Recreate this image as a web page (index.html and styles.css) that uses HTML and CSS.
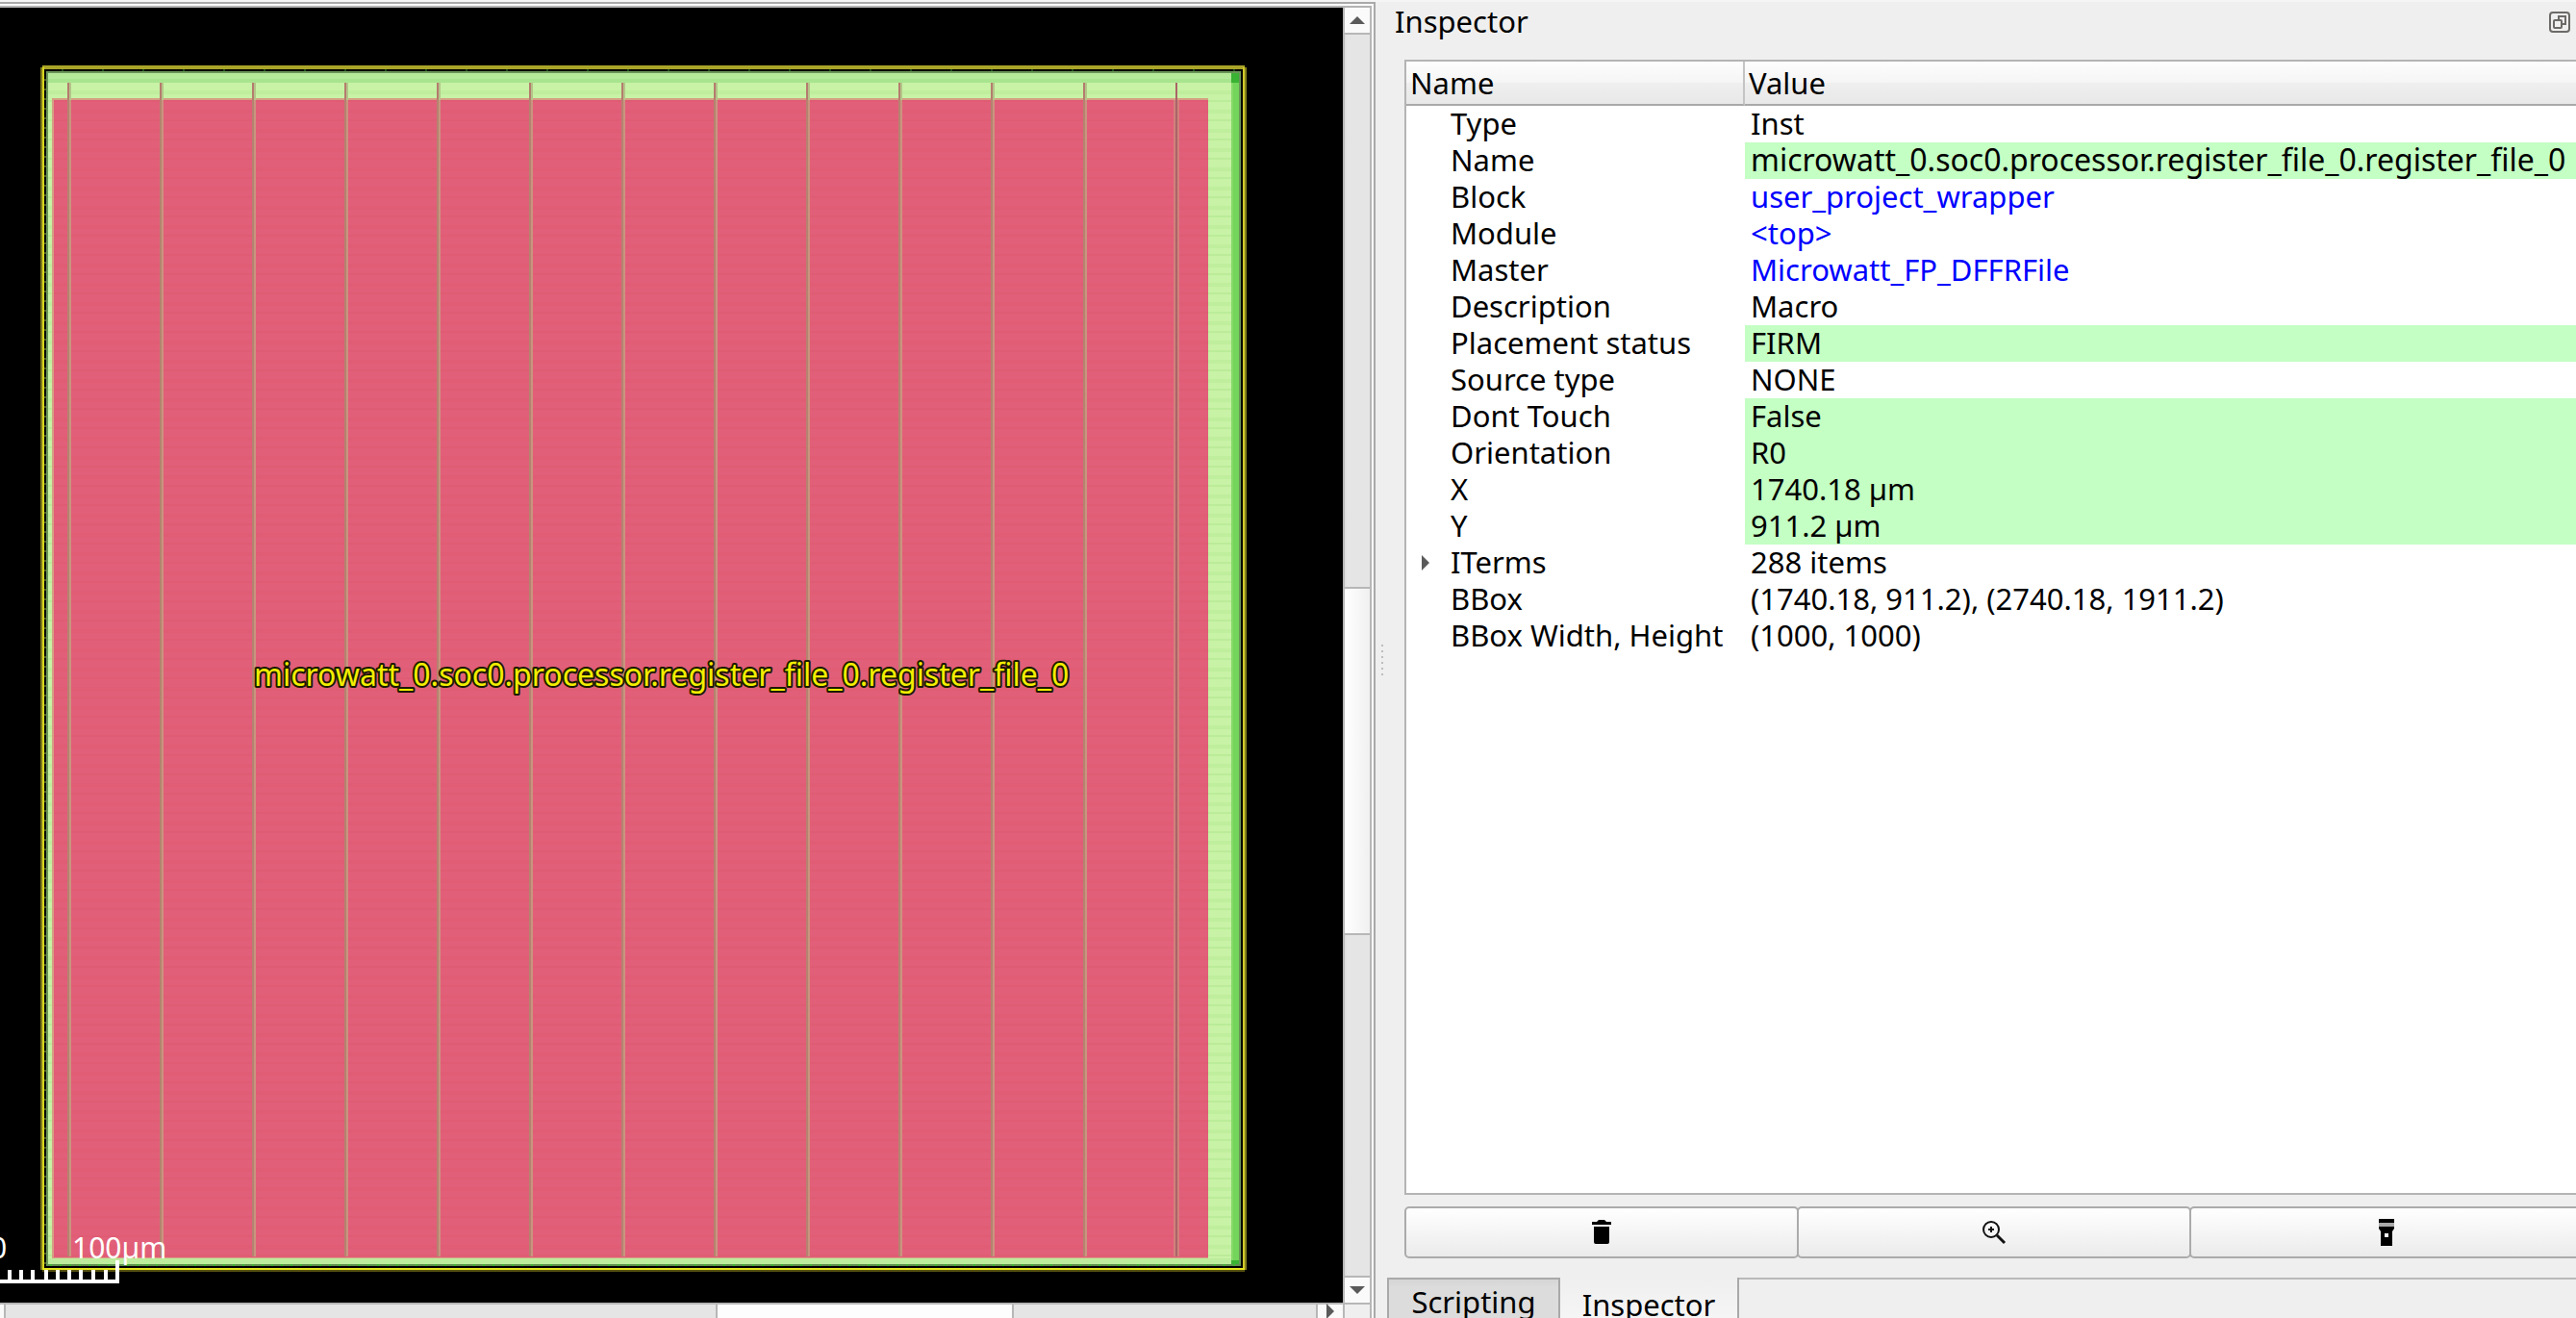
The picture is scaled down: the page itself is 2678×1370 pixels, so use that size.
FILE: index.html
```html
<!DOCTYPE html>
<html lang="en">
<head>
<meta charset="utf-8">
<title>Inspector</title>
<link rel="stylesheet" href="styles.css">
</head>
<body>
<div class="window">
  <main class="viewer">
    <div class="viewport">
      <svg class="layout" viewBox="0 0 1396 1346" preserveAspectRatio="xMinYMin slice" role="img" aria-label="Macro layout">
        <defs>
          <pattern id="rows" width="20" height="20" patternUnits="userSpaceOnUse">
            <rect width="20" height="20" fill="#c8f2a6"/>
            <rect y="6" width="20" height="4" fill="#bfee9d"/>
            <rect y="16" width="20" height="2" fill="#bbec99"/>
          </pattern>
          <pattern id="metal" width="20" height="20" patternUnits="userSpaceOnUse">
            <rect width="20" height="20" fill="#e25f79"/>
            <rect y="6" width="20" height="4" fill="#e05d75"/>
            <rect y="16" width="20" height="2" fill="#df5c74"/>
          </pattern>
          <pattern id="straps" x="70" width="96" height="20" patternUnits="userSpaceOnUse">
            <rect width="2" height="20" fill="#b4836f"/>
            <rect x="2" width="2" height="20" fill="#ca947f"/>
          </pattern>
          <pattern id="strap-ends" x="70" width="96" height="20" patternUnits="userSpaceOnUse">
            <rect width="2" height="20" fill="#b57c6e"/>
            <rect x="2" width="2" height="20" fill="#b5c489"/>
          </pattern>
          <pattern id="pins" x="64" width="42" height="2" patternUnits="userSpaceOnUse">
            <rect width="2" height="2" fill="#1d4a17"/>
          </pattern>
          <pattern id="sidepins" width="2" height="10" y="4" patternUnits="userSpaceOnUse">
            <rect width="2" height="2" fill="#4c5a1c"/>
          </pattern>
          <pattern id="dashes" x="2" width="10" height="2" patternUnits="userSpaceOnUse">
            <rect width="10" height="2" fill="#5f8f4d"/>
            <rect width="2" height="2" fill="#3fb435"/>
          </pattern>
        </defs>
        <g shape-rendering="crispEdges">
          <rect x="44" y="60" width="1250" height="4" fill="#a9a428"/>
          <rect x="42" y="62" width="2" height="1250" fill="#7d7a1c"/>
          <rect x="44" y="62" width="2" height="1250" fill="#d9d61f"/>
          <rect x="1292" y="62" width="2" height="1250" fill="#d0c92a"/>
          <rect x="1294" y="62" width="2" height="1250" fill="#857f1e"/>
          <rect x="44" y="1310" width="1250" height="2" fill="#e5e31d"/>
          <rect x="44" y="1312" width="1250" height="2" fill="#555110"/>
          <rect x="46" y="64" width="1246" height="2" fill="url(#pins)"/>
          <rect x="46" y="70" width="2" height="1236" fill="url(#sidepins)"/>
          <rect x="48" y="66" width="1242" height="1240" fill="#6a9558"/>
          <rect x="50" y="68" width="1238" height="1238" fill="url(#rows)"/>
          <rect x="50" y="68" width="1238" height="6" fill="#b5e99a"/>
          <rect x="50" y="74" width="1238" height="4" fill="#a8e48e"/>
          <rect x="50" y="1300" width="1238" height="6" fill="#bdec9c"/>
          <rect x="48" y="1306" width="1242" height="2" fill="url(#dashes)"/>
          <rect x="1280" y="68" width="8" height="1238" fill="#73d55b"/>
          <rect x="1280" y="68" width="2" height="1238" fill="#86d969"/>
          <rect x="1280" y="68" width="8" height="10" fill="#3ab233"/>
          <rect x="1280" y="1302" width="8" height="4" fill="#3ab233"/>
          <rect x="54" y="94" width="1202" height="1206" fill="#d5a083"/>
          <rect x="56" y="96" width="1200" height="1203" fill="url(#metal)"/>
          <rect x="70" y="78" width="1150" height="18" fill="url(#strap-ends)"/>
          <rect x="70" y="96" width="1150" height="1202" fill="url(#straps)"/>
          <rect x="1220" y="96" width="6" height="1202" fill="#d2807c"/>
          <rect x="1222" y="78" width="2" height="1220" fill="#ab6468"/>
        </g>
        <text class="inst-label" x="264" y="705">microwatt_0.soc0.processor.register_file_0.register_file_0</text>
        <g shape-rendering="crispEdges" fill="#fff">
          <rect y="1322" width="124" height="4"/>
          <rect x="120" y="1302" width="4" height="24"/>
          <path d="M8 1312h4v10h-4zM20 1312h4v10h-4zM32 1312h4v10h-4zM46 1312h4v10h-4zM58 1312h4v10h-4zM70 1312h4v10h-4zM82 1312h4v10h-4zM95 1312h4v10h-4zM108 1312h4v10h-4z"/>
        </g>
        <text class="scale-label" x="-10" y="1300">0</text>
        <text class="scale-label" x="75" y="1300">100µm</text>
      </svg>
    </div>
    <div class="vbar">
      <button class="step" aria-label="Scroll up"><svg width="16" height="8"><path d="M0 8L8 0l8 8z"/></svg></button>
      <div class="trough"></div>
      <div class="thumb"></div>
      <div class="trough rest"></div>
      <button class="step" aria-label="Scroll down"><svg width="16" height="8"><path d="M0 0h16L8 8z"/></svg></button>
    </div>
    <div class="hbar">
      <button class="step" aria-label="Scroll left"></button>
      <div class="trough"></div>
      <div class="thumb"></div>
      <div class="trough rest"></div>
      <button class="step" aria-label="Scroll right"><svg width="8" height="16"><path d="M0 0l8 8-8 8z"/></svg></button>
    </div>
    <div class="corner"></div>
  </main>

  <div class="splitter"><i></i><i></i><i></i><i></i><i></i><i></i></div>

  <aside class="dock">
    <header class="dock-title">
      <h1>Inspector</h1>
      <button class="float" aria-label="Float panel">
        <svg width="22" height="22" fill="none" stroke="#6c6a67" stroke-width="2"><rect x="1" y="1" width="20" height="20" rx="3"/><path d="M10 8V5h7v8h-3"/><rect x="5" y="9" width="8" height="8" rx="1"/></svg>
      </button>
    </header>
    <div class="tree">
      <table>
        <thead><tr><th>Name</th><th>Value</th></tr></thead>
        <tbody>
          <tr><td>Type</td><td>Inst</td></tr>
          <tr><td>Name</td><td class="edit path">microwatt_0.soc0.processor.register_file_0.register_file_0</td></tr>
          <tr><td>Block</td><td><a href="#block">user_project_wrapper</a></td></tr>
          <tr><td>Module</td><td><a href="#module">&lt;top&gt;</a></td></tr>
          <tr><td>Master</td><td><a href="#master">Microwatt_FP_DFFRFile</a></td></tr>
          <tr><td>Description</td><td>Macro</td></tr>
          <tr><td>Placement status</td><td class="edit">FIRM</td></tr>
          <tr><td>Source type</td><td>NONE</td></tr>
          <tr><td>Dont Touch</td><td class="edit">False</td></tr>
          <tr><td>Orientation</td><td class="edit">R0</td></tr>
          <tr><td>X</td><td class="edit">1740.18 µm</td></tr>
          <tr><td>Y</td><td class="edit">911.2 µm</td></tr>
          <tr><td class="branch">ITerms</td><td>288 items</td></tr>
          <tr><td>BBox</td><td>(1740.18, 911.2), (2740.18, 1911.2)</td></tr>
          <tr><td>BBox Width, Height</td><td>(1000, 1000)</td></tr>
        </tbody>
      </table>
    </div>
    <div class="actions">
      <button aria-label="Delete"><svg width="28" height="28" viewBox="0 0 28 28"><path d="M4 3h5l2-2h6l2 2h5v3H4zM6 8h16v16q0 2-2 2H8q-2 0-2-2z"/></svg></button>
      <button aria-label="Zoom to"><svg width="28" height="28" viewBox="0 0 28 28" fill="none" stroke="#111" stroke-width="2"><circle cx="11" cy="11" r="8"/><path d="M8 11h6M11 8v6"/><path d="M17 17l8 8" stroke-width="3"/></svg></button>
      <button aria-label="Highlight"><svg width="28" height="28" viewBox="0 0 28 28"><path d="M6 0h16v4H6z"/><path d="M6 4h16v4H6z" fill="#aaa"/><path d="M6 8h16v2l-2 3v15H8V13l-2-3zM12 15v4h4v-4z" fill-rule="evenodd"/></svg></button>
    </div>
    <nav class="tabs">
      <button class="tab">Scripting</button>
      <button class="tab active">Inspector</button>
      <div class="tab-fill"></div>
    </nav>
  </aside>
</div>
</body>
</html>
```
FILE: styles.css
```css
* {
  box-sizing: border-box;
}

body {
  margin: 0;
  background: #efefef;
  color: #000;
  font: 31px/36px "Noto Sans", "Open Sans", sans-serif;
}

button {
  margin: 0;
  padding: 0;
  border: 0;
  background: none;
  color: inherit;
  font: inherit;
}

svg {
  display: block;
}

.window {
  display: grid;
  grid-template-columns: minmax(0, 1430fr) 12px minmax(0, 1236fr);
  grid-template-rows: minmax(0, 1fr);
  height: 100vh;
  overflow: hidden;
  border-top: 2px solid #f5f5f5;
}

/* Layout viewer */
.viewer {
  display: grid;
  grid-template-columns: minmax(0, 1fr) 30px;
  grid-template-rows: minmax(0, 1fr) 16px;
  border: solid #a9a9a9;
  border-width: 2px 2px 0 0;
  padding: 2px 2px 0 0;
  background: linear-gradient(#b4b4b4, #b4b4b4) 0 2px / calc(100% - 2px) 100% no-repeat #f8f8f8;
}

.viewport {
  margin-top: 2px;
  overflow: hidden;
  background: #000;
}

.layout {
  width: 100%;
  height: 100%;
}

.inst-label {
  fill: #f2ee00;
  stroke: #1c1a00;
  stroke-width: 4px;
  stroke-linejoin: round;
  paint-order: stroke;
  font-size: 32px;
}

.scale-label {
  fill: #fff;
  font-size: 30px;
}

.vbar {
  display: flex;
  flex-direction: column;
  margin-top: 2px;
  border: solid #b7b7b7;
  border-width: 0 2px;
}

.hbar {
  display: flex;
  border-top: 2px solid #b7b7b7;
}

.step {
  display: flex;
  flex: none;
  align-items: center;
  justify-content: center;
  background: #fafafa;
  fill: #5a5a5a;
}

.vbar .step {
  height: 26px;
}

.vbar .trough {
  flex: 578 0 0;
  border-top: 2px solid #b7b7b7;
  background: linear-gradient(90deg, #dcdcdc, #e5e5e5 3px);
}

.vbar .thumb {
  flex: 360 0 0;
  border-top: 2px solid #b7b7b7;
  background: linear-gradient(90deg, #fff, #f0f0f0);
}

.vbar .rest {
  flex: 356 0 0;
  border-bottom: 2px solid #b7b7b7;
}

.hbar .step {
  width: 26px;
}

.hbar .step:first-child {
  width: 4px;
}

.hbar .trough {
  flex: 742 0 0;
  border-left: 2px solid #b7b7b7;
  background: #e5e5e5;
}

.hbar .thumb {
  flex: 308 0 0;
  border-left: 2px solid #b7b7b7;
  background: #fdfdfd;
}

.hbar .rest {
  flex: 316 0 0;
  border-right: 2px solid #b7b7b7;
}

.corner {
  border: solid #b7b7b7;
  border-width: 2px 2px 0;
  background: #efefef;
}

/* Splitter handle */
.splitter {
  display: flex;
  flex-direction: column;
  align-items: center;
  justify-content: center;
  gap: 4px;
  padding-bottom: 0;
}

.splitter i {
  width: 2px;
  height: 2px;
  margin-left: 2px;
  background: #bdbdbd;
}

/* Inspector dock */
.dock {
  display: flex;
  flex-direction: column;
  min-width: 0;
}

.dock-title {
  display: flex;
  align-items: flex-start;
  justify-content: space-between;
  height: 60px;
  padding: 2px 6px 0 8px;
}

.dock-title h1 {
  margin: 0;
  font: inherit;
}

.float {
  margin-top: 8px;
}

.tree {
  flex: 1;
  margin-left: 18px;
  overflow: hidden;
  border: 2px solid #b4b4b4;
  border-right: 0;
  background: #fff;
}

table {
  width: 100%;
  border-collapse: separate;
  border-spacing: 0;
  table-layout: fixed;
  white-space: nowrap;
}

th {
  height: 46px;
  padding: 0 0 0 4px;
  border-bottom: 2px solid #a9a9a9;
  background: linear-gradient(#fdfdfd, #f5f5f5 50%, #efefef 50%, #e8e8e8);
  font-weight: normal;
  text-align: left;
}

th:first-child {
  width: 352px;
  border-right: 2px solid #c4c4c4;
}

td {
  height: 38px;
  padding: 0 0 0 6px;
  vertical-align: top;
}

td:first-child {
  padding-left: 46px;
}

.edit {
  background: #c4ffc4;
}

.path {
  font-size: 32px;
}

.branch::before {
  content: "";
  float: left;
  width: 0;
  height: 0;
  margin: 11px 0 0 -30px;
  border: solid transparent;
  border-width: 8px 0 8px 8px;
  border-left-color: #5a5a5a;
}

a {
  color: #00f;
  text-decoration: none;
}

.actions {
  display: grid;
  grid-template-columns: repeat(3, 1fr);
  margin: 12px -6px 20px 18px;
}

.actions button {
  display: flex;
  align-items: center;
  justify-content: center;
  height: 54px;
  margin-right: -2px;
  border: 2px solid #ababab;
  border-radius: 5px;
  background: linear-gradient(#fff, #ebebeb);
}

.tabs {
  display: flex;
  height: 42px;
  overflow: hidden;
}

.tab {
  display: block;
  flex: none;
  align-self: flex-start;
  padding: 4px 0 10px;
  border: solid #a9a9a9;
  border-width: 2px 2px 0;
  background: linear-gradient(#d5d5d5, #dcdcdc 8px);
  line-height: 38px;
  text-align: center;
}

.tab:first-child {
  width: 180px;
}

.tab.active {
  width: 186px;
  border-width: 0 2px 0 0;
  background: linear-gradient(#efefef, #f8f8f8);
  line-height: 48px;
}

.tab-fill {
  flex: 1;
  border-top: 2px solid #b9b9b9;
}
```
